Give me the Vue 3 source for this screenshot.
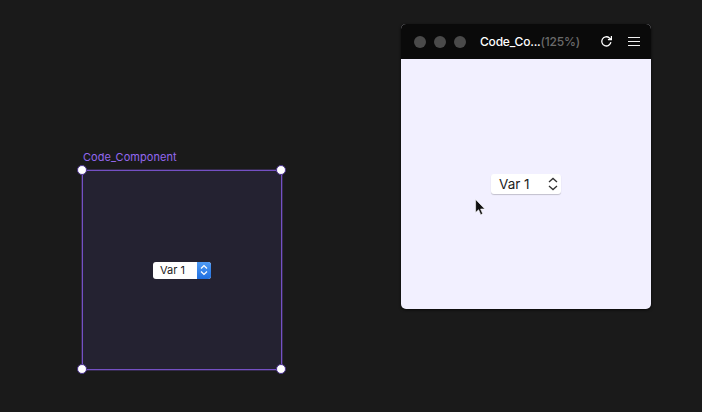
<template>
  <div class="canvas">
    <div class="frame">
      <div class="frame-label">Code_Component</div>
      <span class="handle tl"></span>
      <span class="handle tr"></span>
      <span class="handle bl"></span>
      <span class="handle br"></span>
      <div class="native-select">
        <span class="native-text">Var 1</span>
        <span class="native-btn">
          <svg width="8" height="12" viewBox="0 0 8 12" fill="none" stroke="#fff" stroke-width="1.3">
            <path d="M1 4.4 4 1.6 7 4.4" />
            <path d="M1 7.6 4 10.4 7 7.6" />
          </svg>
        </span>
      </div>
    </div>

    <div class="preview">
      <div class="titlebar">
        <div class="dots">
          <span class="dot"></span>
          <span class="dot"></span>
          <span class="dot"></span>
        </div>
        <div class="title">Code_Co...<span class="zoom">(125%)</span></div>
        <svg class="refresh" width="13" height="13" viewBox="0 0 13 13" fill="none" stroke="#fff" stroke-width="1.3">
          <path d="M10.9 7.2A4.6 4.6 0 1 1 9.4 2.9L11 4.3" />
          <path d="M11.4 1v3.6H7.9" stroke-width="1.2" />
        </svg>
        <div class="burger">
          <span></span>
          <span></span>
          <span></span>
        </div>
      </div>
      <div class="preview-body">
        <div class="select">
          <span>Var 1</span>
          <svg width="10" height="14" viewBox="0 0 10 14" fill="none" stroke="#333" stroke-width="1.3">
            <path d="M1 5 5 1.4 9 5" />
            <path d="M1 9 5 12.6 9 9" />
          </svg>
        </div>
      </div>
    </div>

    <svg class="cursor" width="11" height="17" viewBox="0 0 11 17">
      <path d="M.6.4v13.2l3-2.9 2.1 5 2-.9-2.1-4.8h4.2z" fill="#111" stroke="#fff" stroke-width=".6" />
    </svg>
  </div>
</template>

<script setup>
</script>

<style>
html,
body {
  margin: 0;
  background: #1a1a1a;
}
</style>

<style scoped>
.canvas {
  position: relative;
  width: 702px;
  height: 412px;
  overflow: hidden;
  background: #1a1a1a;
  font-family: "Inter", "Liberation Sans", sans-serif;
}

.frame {
  position: absolute;
  left: 82px;
  top: 170px;
  box-sizing: border-box;
  width: 200px;
  height: 200px;
  display: flex;
  align-items: center;
  justify-content: center;
  background: #242231;
  border: 1px solid #7450c4;
  box-shadow: 0 0 0 1px rgba(116, 80, 196, 0.3);
}

.frame-label {
  position: absolute;
  left: 0;
  top: -21px;
  font-size: 11px;
  line-height: 15px;
  letter-spacing: 0.05px;
  color: #9468f0;
  white-space: nowrap;
}

.handle {
  position: absolute;
  box-sizing: border-box;
  width: 10px;
  height: 10px;
  border-radius: 50%;
  background: #fff;
  border: 1px solid #4c3391;
}

.tl { left: -6px; top: -6px; }
.tr { right: -5px; top: -6px; }
.bl { left: -6px; bottom: -5px; }
.br { right: -5px; bottom: -5px; }

.native-select {
  display: flex;
  width: 58px;
  height: 17px;
  border-radius: 3px;
  overflow: hidden;
  background: #fff;
}

.native-text {
  flex: 1;
  padding-left: 7px;
  font-size: 11px;
  line-height: 17px;
  color: #1c1c1c;
}

.native-btn {
  display: flex;
  align-items: center;
  justify-content: center;
  width: 14px;
  background: linear-gradient(#4f9bf5, #1f6fe0);
}

.preview {
  position: absolute;
  left: 401px;
  top: 24px;
  display: flex;
  flex-direction: column;
  width: 250px;
  height: 285px;
  border-radius: 5px;
  overflow: hidden;
  background: #f2f0ff;
  box-shadow: 0 1px 3px rgba(0, 0, 0, 0.7);
}

.titlebar {
  display: flex;
  align-items: center;
  height: 35px;
  padding: 0 11px 0 13px;
  background: #0a0a0a;
}

.dots {
  display: flex;
  gap: 8px;
}

.dot {
  width: 12px;
  height: 12px;
  border-radius: 50%;
  background: #4a4a4a;
}

.title {
  margin-left: 14px;
  flex: 1;
  font-size: 12px;
  font-weight: 500;
  letter-spacing: -0.2px;
  color: #fff;
  white-space: nowrap;
}

.zoom {
  color: #6a6a6a;
}

.refresh {
  margin-right: 15px;
}

.burger {
  display: flex;
  flex-direction: column;
  gap: 3px;
  width: 12px;
}

.burger span {
  height: 1px;
  background: #f0f0f0;
}

.preview-body {
  flex: 1;
  display: flex;
  align-items: center;
  justify-content: center;
}

.select {
  display: flex;
  align-items: center;
  justify-content: space-between;
  box-sizing: border-box;
  width: 70px;
  height: 20px;
  padding: 0 3px 0 8px;
  border-radius: 3px;
  background: #fff;
  box-shadow: 0 1px 1px rgba(0, 0, 0, 0.2);
  font-size: 13.5px;
  color: #1c1c1c;
}

.cursor {
  position: absolute;
  left: 475px;
  top: 199px;
}
</style>
